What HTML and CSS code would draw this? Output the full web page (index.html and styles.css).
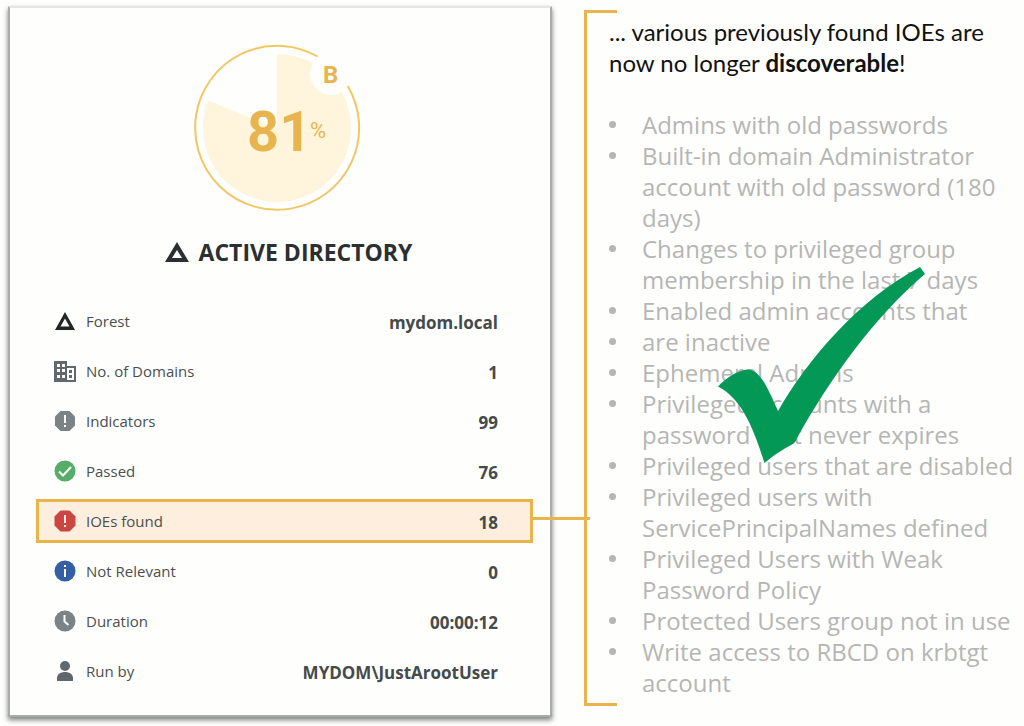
FILE: index.html
```html
<!DOCTYPE html>
<html lang="en">
  <head>
    <meta charset="UTF-8" />
    <meta name="viewport" content="width=device-width, initial-scale=1.0" />
    <title>Active Directory report</title>
    <link rel="stylesheet" href="styles.css">
  </head>
  <body>
    <div class="wrapper">
      <section class="card">
        <div class="gauge">
          <svg viewBox="0 0 168 168" role="img" aria-label="Score 81%, grade B">
            <path d="M84 84V10A74 74 0 1 1 15.200 56.800Z" fill="#fff5dc" />
            <circle cx="138" cy="30" r="21" fill="#fefefd" />
            <path d="M124.700 12.500A82 82 0 1 0 154.700 42" fill="none" stroke="#f0c765" stroke-width="2" />
            <text class="grade" x="130" y="39">B</text>
            <text class="score" x="54" y="107">81</text>
            <text class="percent" x="117" y="94">%</text>
          </svg>
        </div>

        <h1>
          <svg width="24" height="20" viewBox="0 0 24 20"><path fill="#2b2f31" fill-rule="evenodd" d="M12 0L24 20H0ZM12 8L7 16H17Z" /></svg>
          ACTIVE DIRECTORY
        </h1>

        <dl class="stats">
          <div class="row">
            <dt>
              <svg class="icon" viewBox="0 0 22 22"><path fill="#202526" fill-rule="evenodd" d="M11 2L21 20H1ZM11 8.500L6.500 16.500H15.500Z" /></svg>
              Forest
            </dt>
            <dd>mydom.local</dd>
          </div>
          <div class="row">
            <dt>
              <svg class="icon" viewBox="0 0 22 22">
                <path fill="#5f696d" d="M0 1H13V6H22V22H0Z" />
                <path fill="#fefefd" d="M3 4h3v3H3zM8 4h3v3H8zM3 9h3v3H3zM8 9h3v3H8zM3 15h3v3H3zM8 15h3v3H8zM13 8h7v12h-7z" />
                <path fill="#5f696d" d="M15 10h3v3h-3zM15 15h3v3h-3z" />
              </svg>
              No. of Domains
            </dt>
            <dd>1</dd>
          </div>
          <div class="row">
            <dt>
              <svg class="icon" viewBox="0 0 22 22"><path fill="#7b8387" d="M6.500 1H15.500L21 6.500V15.500L15.500 21H6.500L1 15.500V6.500Z" /><path fill="#fff" d="M10 5h2v8h-2zM10 15h2v2h-2z" /></svg>
              Indicators
            </dt>
            <dd>99</dd>
          </div>
          <div class="row">
            <dt>
              <svg class="icon" viewBox="0 0 22 22"><circle cx="11" cy="11" r="10.500" fill="#55ad68" /><path d="M5 11.500L9 15.500L17 7" fill="none" stroke="#fff" stroke-width="2" /></svg>
              Passed
            </dt>
            <dd>76</dd>
          </div>
          <div class="row active">
            <dt>
              <svg class="icon" viewBox="0 0 22 22"><path fill="#cb4542" d="M6.500 0.500H15.500L21.500 6.500V15.500L15.500 21.500H6.500L0.500 15.500V6.500Z" /><path fill="#ffe9e0" d="M10 5h2v8h-2zM10 15h2v2h-2z" /></svg>
              IOEs found
            </dt>
            <dd>18</dd>
          </div>
          <div class="row">
            <dt>
              <svg class="icon" viewBox="0 0 22 22"><circle cx="11" cy="11" r="10.500" fill="#355fa3" /><path fill="#fff" d="M10 5h2v2h-2zM10 9h2v8h-2z" /></svg>
              Not Relevant
            </dt>
            <dd>0</dd>
          </div>
          <div class="row">
            <dt>
              <svg class="icon" viewBox="0 0 22 22"><circle cx="11" cy="11" r="10.500" fill="#7b8387" /><path d="M10.500 5V11.500L14.500 15" fill="none" stroke="#fff" stroke-width="2" /></svg>
              Duration
            </dt>
            <dd>00:00:12</dd>
          </div>
          <div class="row">
            <dt>
              <svg class="icon" viewBox="0 0 22 22"><circle cx="11" cy="6" r="5" fill="#5f696d" /><path fill="#5f696d" d="M3 21V18C3 14 7 12 11 12S19 14 19 18V21Z" /></svg>
              Run by
            </dt>
            <dd>MYDOM\JustArootUser</dd>
          </div>
        </dl>
      </section>

      <section class="findings">
        <p class="intro">... various previously found IOEs are<br>now no longer <strong>discoverable</strong>!</p>
        <ul>
          <li>Admins with old passwords</li>
          <li>Built-in domain Administrator account with old password (180 days)</li>
          <li>Changes to privileged group membership in the last 7 days</li>
          <li>Enabled admin accounts that</li>
          <li>are inactive</li>
          <li>Ephemeral Admins</li>
          <li>Privileged accounts with a password that never expires</li>
          <li>Privileged users that are disabled</li>
          <li>Privileged users with ServicePrincipalNames defined</li>
          <li>Privileged Users with Weak Password Policy</li>
          <li>Protected Users group not in use</li>
          <li>Write access to RBCD on krbtgt account</li>
        </ul>
        <svg class="check" viewBox="18 27 207 196"><path fill="#049857" d="M18 146.500C26 138 38 130 48 129.500C60 130 68 148 78 171C108 119 158 60 220 27L225 34C174 77 130 139 97 198Q96 202 92 204.500C82 210 74 215 64.500 223C55 193 43 159 18 146.500Z" /></svg>
      </section>
    </div>
  </body>
</html>
```
FILE: styles.css
```css
html,
body {
  margin: 0;
  box-sizing: border-box;
  background: #fefefd;
  font-family: "Open Sans", "Noto Sans", sans-serif;
}

.wrapper {
  display: grid;
  grid-template-columns: 544fr 440fr;
  gap: 32px;
  align-items: start;
  padding: 6px 0 10px 8px;
}

/* left card */
.card {
  box-sizing: border-box;
  padding: 36px 17px 16px 26px;
  border: 2px solid #a9aca9;
  border-top-color: #e4e5e0;
  box-shadow: 0 3px 5px #7b807d;
}

.gauge {
  display: flex;
  justify-content: center;
  padding-right: 16px;
}

.gauge svg {
  width: 168px;
  height: 168px;
}

.gauge text {
  fill: #e8b44d;
  font-family: Roboto, sans-serif;
}

.gauge .grade {
  font-size: 24px;
  font-weight: bold;
}

.gauge .score {
  font-size: 56px;
  font-weight: bold;
}

.gauge .percent {
  font-size: 22px;
}

h1 {
  display: flex;
  align-items: center;
  justify-content: center;
  gap: 10px;
  height: 30px;
  margin: 25px 0 32px;
  padding-left: 8px;
  color: #2b2f31;
  font-size: 23px;
  font-weight: bold;
}

.stats {
  margin: 0;
}

.row {
  position: relative;
  display: flex;
  align-items: center;
  justify-content: space-between;
  box-sizing: border-box;
  height: 44px;
  margin-bottom: 6px;
  padding: 0 32px 0 15px;
  border: 3px solid transparent;
}

.row.active {
  background: #fdeedd;
  border-color: #e9b44c;
}

/* line from the highlighted row to the findings bracket */
.row.active::after {
  content: "";
  position: absolute;
  left: 100%;
  top: 15px;
  width: 60px;
  height: 3px;
  background: #e9b44c;
}

dt {
  display: flex;
  align-items: center;
  gap: 10px;
  color: #4b4f50;
  font-size: 15px;
}

dd {
  margin: 3px 0 0;
  color: #454a4c;
  font-size: 17px;
  font-weight: bold;
}

.icon {
  width: 22px;
  height: 22px;
}

/* right column */
.findings {
  position: relative;
  margin-top: 4px;
  padding: 6px 0 8px 22px;
  border-left: 3px solid #e9b44c;
}

.findings::before,
.findings::after {
  content: "";
  position: absolute;
  left: 0;
  width: 30px;
  height: 3px;
  background: #e9b44c;
}

.findings::before {
  top: 0;
}

.findings::after {
  bottom: 0;
}

.intro {
  margin: 0 0 31px;
  color: #111;
  font-family: Lato, sans-serif;
  font-size: 24px;
  line-height: 31px;
}

ul {
  margin: 0;
  padding: 0;
  list-style: none;
  color: #b5b6b4;
  font-size: 24px;
  line-height: 31px;
}

li {
  display: flex;
  gap: 26px;
}

li::before {
  content: "";
  flex: 0 0 7px;
  height: 7px;
  margin-top: 12px;
  border-radius: 50%;
  background: #b5b6b4;
}

.check {
  position: absolute;
  left: 131px;
  top: 257px;
  width: 207px;
  height: 196px;
}
```
